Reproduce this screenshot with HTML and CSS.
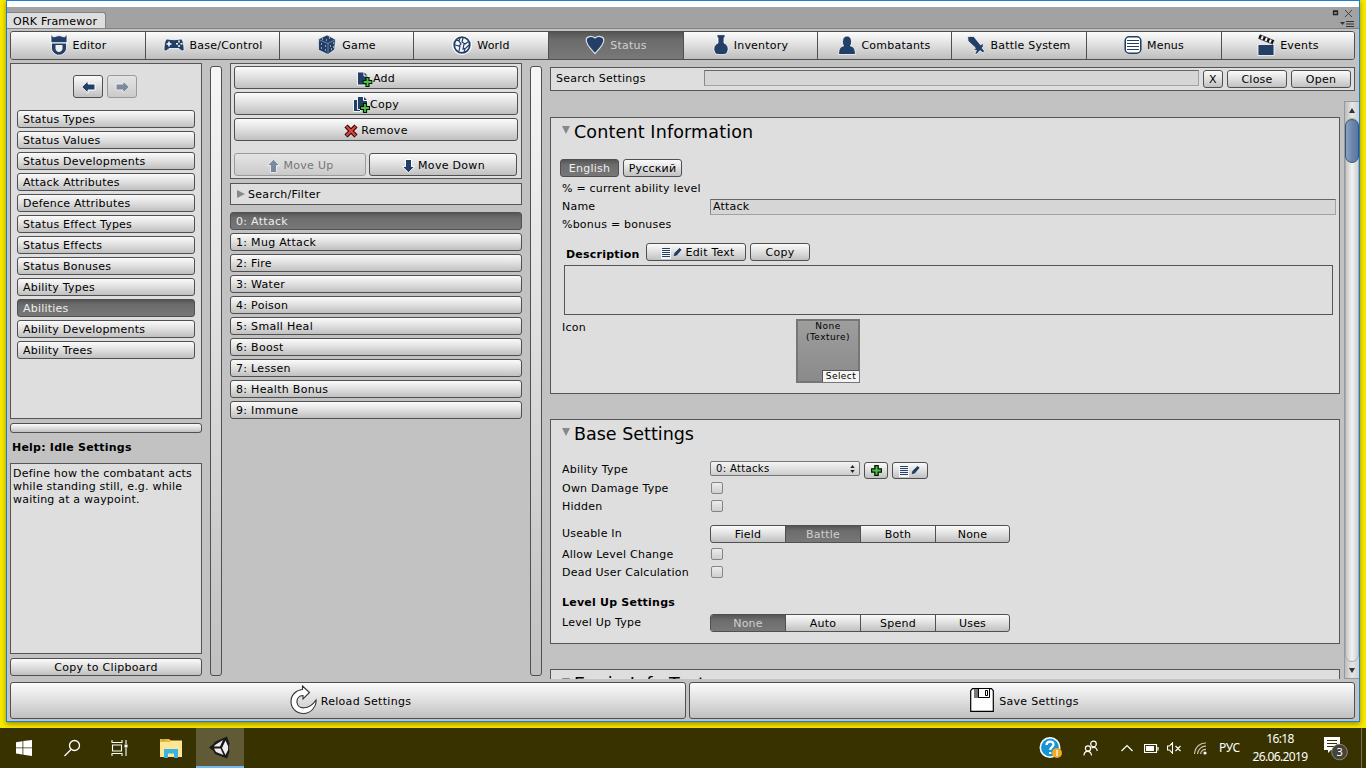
FILE: index.html
```html
<!DOCTYPE html>
<html lang="en">
<head>
<meta charset="utf-8">
<title>ORK Framework</title>
<link rel="stylesheet" href="styles.css">
</head>
<body>
<svg class="defs" width="0" height="0">
  <symbol id="plus" viewBox="0 0 10 10"><path d="M3.5 .5h3v3h3v3h-3v3h-3v-3h-3v-3h3z" fill="#4fc04a" stroke="#001a00" stroke-width="1.2"/></symbol>
  <symbol id="arrow" viewBox="0 0 15 14"><path d="M.7 7L7 .8V4H14v6H7v3.2z" fill="#233f66" stroke="#fff" stroke-width="1"/></symbol>
  <symbol id="edit" viewBox="0 0 22 12"><path d="M0 0h10v12H0z" fill="#f4f6fa"/><path d="M1 1.500h8M1 3.500h8M1 5.500h8M1 7.500h8M1 9.500h8" stroke="#233f66"/><path d="M12 10l1-4L18.500 .7l2.500 2-5 6z" fill="#233f66" stroke="#fff" stroke-width=".6"/></symbol>
</svg>
<div class="desktop">
  <div class="window">
    <div class="titlebar">
      <div class="tab">ORK Framewor</div>
      <svg class="winctl" width="24" height="22" viewBox="0 0 24 22"><path d="M1.500 5.500h4v3h-4zM1 5h5" fill="none" stroke="#222" stroke-width="1.300"/><path d="M13 4l7 7M20 4l-7 7" stroke="#444"/><path d="M8 16h5l-2.500 3z" fill="#333"/><path d="M14 15.500h8M14 18h8M14 20.500h8" stroke="#333"/></svg>
    </div>
    <div class="toolbar">
      <div class="tool w1"><svg width="18" height="22" viewBox="0 0 18 22"><path d="M1 .5l2.500 2.500Q9 0 14.500 3L17 .5V9h-.5v5c0 4-4 7.200-7.500 7.200S1.500 18 1.500 14V9H1z" fill="#233f66" stroke="#fff" stroke-width=".8"/><path d="M1 8.800h16" stroke="#fff" stroke-width="1.200"/><path d="M5.500 11h7v3.500c0 2-2 3.500-3.500 3.500s-3.500-1.500-3.500-3.500z" fill="#f2f2f2"/></svg>Editor</div>
      <div class="tool w2"><svg width="22" height="16" viewBox="0 0 22 16"><path d="M4 2Q11 3.500 18 2c2 0 3 6 3 10.500 0 2-3 2-5-1H6c-2 3-5 3-5 1C1 8 2 2 4 2z" fill="#233f66" stroke="#fff" stroke-width=".8"/><path d="M3.500 7h5M6 4.500v5" stroke="#fff" stroke-width="1.500"/><path d="M16 3.500v2M16 8v2M13 6.700h2M17.500 6.700h2" fill="none" stroke="#fff" stroke-width="1.500"/></svg>Base/Control</div>
      <div class="tool w3"><svg width="20" height="22" viewBox="0 0 20 22"><path d="M10 1l8.500 4.500-1 10L11 20.500 1.500 16v-11z" fill="#233f66" stroke="#fff" stroke-width=".6"/><path d="M1.500 5.500l9.500 4 7-4M11 9.500V20" stroke="#93a4bc" fill="none" stroke-width=".7"/><path d="M5 5h1M9 6h1M12 4h1M4 10h1M8 12h1M4 14h1M8 16h1M13 12h1M16 9h1M14 15h1M16 13h1" stroke="#fff" stroke-width="1.200"/></svg>Game</div>
      <div class="tool w4"><svg width="20" height="20" viewBox="0 0 20 20"><circle cx="10" cy="10" r="8.500" fill="#f4f6fa" stroke="#fff" stroke-width="3"/><circle cx="10" cy="10" r="7.800" fill="none" stroke="#233f66" stroke-width="1.800"/><path d="M4 5l3 1 2 3-2 2-4-1M7 6l1-3M8 11l-1 5M11 3l-1 4 3 2 3-2M12 9l-1 5 3-1 3-3M13 14l-1 3" fill="none" stroke="#233f66" stroke-width="1.200"/></svg>World</div>
      <div class="tool w5 on"><svg width="20" height="20" viewBox="0 0 20 20"><path d="M10 18.500C6 14 1.200 10 1.200 5 1.200 1 7 .5 10 3 13 .5 18.800 1 18.800 5c0 5-4.800 9-8.800 13.500z" fill="#233f66" stroke="#d8dde4" stroke-width="1.200"/></svg>Status</div>
      <div class="tool w6"><svg width="16" height="22" viewBox="0 0 16 22"><path d="M4 .7h8v3h-1V9c5 2.500 5 7 2.500 10.500-1 1.500-10 1.500-11 0C0 16 0 11.500 5 9V3.700H4z" fill="#233f66" stroke="#fff" stroke-width=".8"/></svg>Inventory</div>
      <div class="tool w7"><svg width="18" height="20" viewBox="0 0 18 20"><path d="M.6 19.500c0-6 2-8 5-8.500-2-3-1.500-10 3.400-10s5.400 7 3.400 10c3 .5 5 2.500 5 8.500z" fill="#233f66" stroke="#fff" stroke-width=".8"/></svg>Combatants</div>
      <div class="tool w8"><svg width="18" height="20" viewBox="0 0 18 20"><path d="M.7 1.500h6l7 8.500 2.500-2v3.500L15 13l2.500 3-1.500 2-3-2.500L10 19H7.500l2-3.500-3-.500 2-2L1 6z" fill="#233f66" stroke="#fff" stroke-width=".7"/></svg>Battle System</div>
      <div class="tool w9"><svg width="18" height="20" viewBox="0 0 18 20"><rect x=".4" y="1" width="17.200" height="18" rx="4.500" fill="#fff"/><rect x="1.200" y="1.800" width="15.600" height="16.400" rx="4" fill="#fff" stroke="#233f66" stroke-width="1.600"/><path d="M3 5.500h12M3 8.500h12M3 11.500h12M3 14.500h12" stroke="#233f66"/></svg>Menus</div>
      <div class="tool w10"><svg width="18" height="22" viewBox="0 0 18 22"><path d="M1 10.500h16v11H1z" fill="#233f66" stroke="#fff" stroke-width=".8"/><path d="M2 2.500L17 8.500" stroke="#fff" stroke-width="4.500"/><path d="M2 2.500L17 8.500" stroke="#111" stroke-width="3.600" stroke-dasharray="2.400 2"/><path d="M3 .7L17.500 6.800M1.500 4.500L16 10.300" stroke="#111" stroke-width=".7"/></svg>Events</div>
    </div>
    <div class="main">
      <div class="left">
        <div class="box sections">
          <div class="nav">
            <div class="btn"><svg width="15" height="14"><use href="#arrow"/></svg></div>
            <div class="btn off"><svg class="flip" width="15" height="14"><use href="#arrow"/></svg></div>
          </div>
          <div class="list">
            <div class="btn">Status Types</div><div class="btn">Status Values</div><div class="btn">Status Developments</div><div class="btn">Attack Attributes</div><div class="btn">Defence Attributes</div><div class="btn">Status Effect Types</div><div class="btn">Status Effects</div><div class="btn">Status Bonuses</div><div class="btn">Ability Types</div><div class="btn on">Abilities</div><div class="btn">Ability Developments</div><div class="btn">Ability Trees</div>
          </div>
        </div>
        <div class="btn hsplit"></div>
        <div class="helptitle">Help: Idle Settings</div>
        <div class="box help">Define how the combatant acts<br>while standing still, e.g. while<br>waiting at a waypoint.</div>
        <div class="btn clip">Copy to Clipboard</div>
      </div>
      <div class="vsplit"></div>
      <div class="middle">
        <div class="box actions">
          <div class="btn"><svg width="16" height="16" viewBox="0 0 16 16"><path d="M.5 1h7l3.500 3.500V14H.5z" fill="#233f66" stroke="#fff" stroke-width=".9"/><path d="M7 1v4h4" fill="none" stroke="#fff"/><use href="#plus" x="5.500" y="6" width="10" height="10"/></svg>Add</div>
          <div class="btn"><svg width="17" height="17" viewBox="0 0 17 17"><path d="M.5 3.500h7v12h-7z" fill="#233f66" stroke="#fff" stroke-width=".9"/><path d="M4.500 .5h6.500l3.500 3.500v9.500h-10z" fill="#233f66" stroke="#fff" stroke-width=".9"/><path d="M10.500 .5v4h4" fill="none" stroke="#fff"/><use href="#plus" x="7" y="7" width="10" height="10"/></svg>Copy</div>
          <div class="btn rm"><svg width="14" height="14" viewBox="0 0 14 14"><path d="M2 2l10 10M12 2L2 12" stroke="#260000" stroke-width="4.400"/><path d="M2.500 2.500l9 9M11.500 2.500l-9 9" stroke="#e04440" stroke-width="2.400"/></svg>Remove</div>
          <div class="moves">
            <div class="btn off"><svg class="up" width="15" height="14"><use href="#arrow"/></svg>Move Up</div>
            <div class="btn dn"><svg class="down" width="15" height="14"><use href="#arrow"/></svg>Move Down</div>
          </div>
        </div>
        <div class="box filter"><i class="tri-r"></i>Search/Filter</div>
        <div class="list entries">
          <div class="btn on">0: Attack</div><div class="btn">1: Mug Attack</div><div class="btn">2: Fire</div><div class="btn">3: Water</div><div class="btn">4: Poison</div><div class="btn">5: Small Heal</div><div class="btn">6: Boost</div><div class="btn">7: Lessen</div><div class="btn">8: Health Bonus</div><div class="btn">9: Immune</div>
        </div>
      </div>
      <div class="vsplit"></div>
      <div class="right">
        <div class="box search"><span>Search Settings</span><div class="field"></div><div class="btn x">X</div><div class="btn">Close</div><div class="btn">Open</div></div>
        <div class="scroller">
          <div class="panels">
            <div class="box content">
              <div class="head"><i class="tri-d"></i>Content Information</div>
              <div class="langs"><div class="btn on">English</div><div class="btn">Русский</div></div>
              <div class="row up0">% = current ability level</div>
              <div class="row up0"><span class="lab">Name</span><div class="field name">Attack</div></div>
              <div class="row up0">%bonus = bonuses</div>
              <div class="desc"><b>Description</b><div class="btn et"><svg width="22" height="12"><use href="#edit"/></svg>Edit Text</div><div class="btn cp">Copy</div></div>
              <div class="area"></div>
              <div class="iconrow"><span>Icon</span><div class="thumb"><div>None<br>(Texture)</div><em>Select</em></div></div>
            </div>
            <div class="box base">
              <div class="head"><i class="tri-d"></i>Base Settings</div>
              <div class="row type"><span class="lab">Ability Type</span><div class="drop">0: Attacks<svg width="5" height="8" viewBox="0 0 5 8"><path d="M.3 3l2.200-3 2.200 3zM.3 5l2.200 3 2.200-3z" fill="#222"/></svg></div><div class="btn pl"><svg width="11" height="11"><use href="#plus"/></svg></div><div class="btn ed"><svg width="22" height="12"><use href="#edit"/></svg></div></div>
              <div class="row"><span class="lab">Own Damage Type</span><i class="check"></i></div>
              <div class="row"><span class="lab">Hidden</span><i class="check"></i></div>
              <div class="row segrow"><span class="lab flat">Useable In</span><div class="seg"><b>Field</b><b class="on">Battle</b><b>Both</b><b>None</b></div></div>
              <div class="row"><span class="lab">Allow Level Change</span><i class="check"></i></div>
              <div class="row"><span class="lab">Dead User Calculation</span><i class="check"></i></div>
              <div class="row lvl"><strong>Level Up Settings</strong></div>
              <div class="row lvt"><span class="lab flat">Level Up Type</span><div class="seg"><b class="on">None</b><b>Auto</b><b>Spend</b><b>Uses</b></div></div>
            </div>
            <div class="box next"><div class="head"><i class="tri-d"></i>Equip Info Text</div></div>
          </div>
          <div class="sbar"><div class="sb"><i class="su"></i></div><div class="track"><div class="thumbbar"></div></div><div class="sb"><i class="sd"></i></div></div>
        </div>
      </div>
    </div>
    <div class="bottom">
      <div class="btn reload"><svg width="27" height="30" viewBox="0 0 27 30"><path d="M12.500 1l7 6.500-6.500 6.500V10.500c-4 0-6.500 3-6 7 1 7 12 8 19-2.500C27 21 21 28.500 13.500 28.500 6 28.500 1 23 1 16.500 1 10 6 5 12.500 4.500z" fill="#fff" stroke="#333" stroke-width="1.100"/></svg>Reload Settings</div>
      <div class="btn save"><svg width="24" height="24" viewBox="0 0 24 24"><path d="M2.500 .7h19l1.800 2v20.600H.7V2.700z" fill="#fff" stroke="#000" stroke-width="1.200"/><path d="M4 1h5v9H4z" fill="#777"/><path d="M8.500 1v8.500h11V1" fill="#fff" stroke="#000"/><path d="M15.500 2.500h2v5h-2z" fill="none" stroke="#000"/></svg>Save Settings</div>
    </div>
  </div>
</div>
<div class="taskbar">
  <div class="cell"><svg width="16" height="16" viewBox="0 0 16 16"><path d="M0 2.300l6.500-1v6.200H0zM7.300 1.100L16 0v7.500H7.300zM0 8.300h6.500v6.200l-6.500-1zM7.300 8.300H16V16l-8.700-1.200z" fill="#fff"/></svg></div>
  <div class="cell"><svg width="18" height="18" viewBox="0 0 18 18"><circle cx="11.500" cy="6.500" r="5" fill="none" stroke="#fff" stroke-width="1.300"/><path d="M8 10.500L1.500 17" stroke="#fff" stroke-width="1.300"/></svg></div>
  <div class="cell"><svg width="18" height="16" viewBox="0 0 18 16"><path d="M1 0v2.500h10V0M1 16v-2.500h10V16M1.500 5h9v6h-9zM15 0v4M15 8v8" fill="none" stroke="#fff" stroke-width="1.100"/><path d="M13.500 4.500h3v3h-3z" fill="#fff"/></svg></div>
  <div class="cell folder"><svg width="22" height="19" viewBox="0 0 22 19"><path d="M0 0h9l1.500 1.500H22V18H0z" fill="#ffe695"/><path d="M0 0h9l1 3H0z" fill="#f2b828"/><path d="M2 1h3" stroke="#36b7e8"/><path d="M4 10h14v9h-4v-4.500H8V19H4z" fill="#37b3e6"/></svg></div>
  <div class="cell active"><svg width="22" height="23" viewBox="0 0 22 23"><path d="M0 11.500L4.500 8l1-2L18 .5l2.500 7-1 4 1 4-2.500 7L6 18l-1.500-3z" fill="#191919"/><path d="M6 9l8-5-3 6.500H5zM5 12.500h6.500L14.500 19 7 16zM16.500 4.500L19 10v4l-2.500 5-3.500-7z" fill="#eee"/></svg></div>
  <div class="tray">
    <svg class="t-help" width="24" height="22" viewBox="0 0 24 22"><circle cx="11" cy="10.500" r="9.700" fill="#1695d3" stroke="#fff" stroke-width="1.600"/><path d="M7.500 8c.2-4.500 7-4.500 7-.5 0 2.500-3.300 2.700-3.300 5.500M11.200 15v2" fill="none" stroke="#fff" stroke-width="2.300"/><circle cx="18" cy="16" r="5" fill="#f6a821"/><path d="M18 13v6" stroke="#fff" stroke-width="1.400"/></svg>
    <svg class="t-people" width="15" height="17" viewBox="0 0 15 17"><g fill="none" stroke="#fff" stroke-width="1.200"><circle cx="10.500" cy="4" r="2.800"/><circle cx="5" cy="8.500" r="2.600"/><path d="M1 15.500c0-5.500 7-5.500 7.500 0M8.500 8c3-1.500 5.500 0 5.700 3"/></g></svg>
    <svg class="t-up" width="12" height="8" viewBox="0 0 12 8"><path d="M.5 7L6 1.500 11.500 7" fill="none" stroke="#fff" stroke-width="1.200"/></svg>
    <svg class="t-bat" width="15" height="9" viewBox="0 0 15 9"><path d="M.5 .5h12v8H.5zM14 3v3.500" fill="none" stroke="#fff" stroke-width="1.200"/><path d="M2 2h8v5H2z" fill="#fff"/></svg>
    <svg class="t-vol" width="15" height="12" viewBox="0 0 15 12"><path d="M.5 4h2l3-3.300v10.600l-3-3.300h-2zM8.500 4l5 5M13.500 4l-5 5" fill="none" stroke="#fff" stroke-width="1.100"/></svg>
    <svg class="t-wifi" width="13" height="13" viewBox="0 0 13 13"><path d="M.5 12C1 5 6 .7 12 1M3.500 12c.5-4.500 4-8 8.500-7.800M6.500 12c.5-2.500 2.500-4.700 5.500-4.700" fill="none" stroke="#c8c5b0" stroke-width="1.200"/><circle cx="11" cy="11" r="1.600" fill="#fff"/></svg>
    <span class="lang">РУС</span>
    <span class="clock">16:18<br>26.06.2019</span>
    <svg class="t-note" width="25" height="25" viewBox="0 0 25 25"><path d="M0 1h16v13H7l-3 3v-3H0z" fill="#fff"/><path d="M3 4.500h10M3 7.500h10M3 10.500h7" stroke="#383200"/><circle cx="15.500" cy="16" r="7.800" fill="#45433a" stroke="#8b8872"/><text x="15.500" y="20" text-anchor="middle" fill="#fff" class="cnt">3</text></svg>
  </div>
  <div class="peek"></div>
</div>
</body>
</html>
```
FILE: styles.css
```css
* { box-sizing: border-box; }
html, body { margin: 0; height: 768px; overflow: hidden; }
body { font: 11px/14px "DejaVu Sans", sans-serif; letter-spacing: .22px; color: #000; background: #f7e900; display: flex; flex-direction: column; }
.defs { position: absolute; }
svg { display: block; flex: none; }
.desktop { height: 728px; padding: 0 6px 6px; }
.window { width: 1354px; height: 722px; border: 1px solid #1a7fd0; background: #c2c2c2; display: flex; flex-direction: column; box-shadow: 0 2px 5px rgba(90,80,0,.6); }
.titlebar { height: 28px; border-top: 6px solid #fff; border-bottom: 1px solid #828282; background: #a2a2a2; display: flex; justify-content: space-between; align-items: flex-end; }
.tab { width: 99px; height: 16px; padding-left: 6px; line-height: 17px; background: #dedede; border: solid #828282; border-width: 1px 1px 0 0; border-radius: 0 3px 0 0; white-space: nowrap; }
.winctl { margin-right: 3px; }
.toolbar { display: flex; height: 29px; margin: 2px 4px 0 3px; border: 1px solid #4f4f4f; border-radius: 3px; overflow: hidden; flex: none; }
.tool { display: flex; align-items: center; justify-content: center; gap: 5px; padding-top: 1px; background: linear-gradient(#fcfcfc, #e4e4e4 40%, #bebebe); border-right: 1px solid #4f4f4f; flex: none; }
.tool svg { margin-top: -2px; }
.tool:last-child { border: 0; }
.w1 { width: 135px; } .w2, .w3, .w6, .w7 { width: 134px; } .w4, .w5, .w8, .w9 { width: 135px; } .w10 { flex: 1; }
.on { background: linear-gradient(#555, #6c6c6c 30%, #787878) !important; color: #eee; }
.tool.on, .seg .on { color: #d0d0d0; }
.box { background: #dedede; border: 1px solid #555; }
.btn { display: flex; align-items: center; justify-content: center; padding-top: 1px; border: 1px solid #505050; border-radius: 3px; background: linear-gradient(#fbfbfb, #e2e2e2 45%, #c0c0c0); height: 18px; line-height: 16px; white-space: nowrap; flex: none; }
.btn.off { border-color: #9a9a9a; background: linear-gradient(#e4e4e4, #d8d8d8 50%, #cacaca); color: #777; }
.off svg { opacity: .5; }
.main { display: flex; flex: none; height: 616px; margin: 3px 0 0 3px; }
.left { width: 192px; display: flex; flex-direction: column; }
.sections { height: 356px; padding: 11px 6px 0; }
.nav { display: flex; justify-content: center; gap: 4px; padding-right: 2px; }
.nav .btn { width: 30px; height: 23px; padding: 0; }
.flip { transform: scaleX(-1); }
.list { display: flex; flex-direction: column; gap: 3px; }
.sections .list { margin-top: 12px; }
.list .btn { justify-content: flex-start; padding-left: 5px; }
.entries .btn { letter-spacing: .3px; }
.hsplit { height: 10px; margin-top: 4px; }
.helptitle { font-weight: bold; margin: 8px 0 0 2px; }
.help { height: 191px; margin-top: 8px; padding: 3px 2px; line-height: 13px; white-space: nowrap; letter-spacing: .2px; }
.clip { margin-top: 4px; letter-spacing: .3px; }
.vsplit { width: 12px; height: 610px; margin: 3px 8px 0; border: 1px solid #505050; border-radius: 3px; background: linear-gradient(#f6f6f6, #c0c0c0); flex: none; }
.middle { width: 292px; flex: none; }
.actions { height: 116px; padding: 2px 3px; display: flex; flex-direction: column; gap: 3px; }
.actions .btn { height: 23px; padding-top: 2px; letter-spacing: .3px; }
.rm { gap: 3px; }
.moves { display: flex; gap: 3px; margin-top: 9px; }
.moves .off { width: 132px; gap: 2px; }
.moves .dn { width: 148px; gap: 2px; }
.up { transform: rotate(90deg); } .down { transform: rotate(-90deg); }
.filter { height: 22px; margin-top: 4px; line-height: 21px; display: flex; align-items: center; padding-left: 6px; gap: 3px; letter-spacing: .3px; }
.tri-r { border-left: 8px solid #888; border-top: 4.5px solid transparent; border-bottom: 4.5px solid transparent; }
.tri-d { width: 0; height: 0; border-top: 8px solid #888; border-left: 4.5px solid transparent; border-right: 4.5px solid transparent; }
.entries { margin-top: 7px; }
.right { width: 809px; flex: none; }
.search { width: 805px; height: 24px; margin-top: 4px; padding: 0 3px 0 5px; display: flex; align-items: flex-start; }
.search span { width: 148px; line-height: 21px; }
.search .field { width: 495px; height: 16px; margin-top: 2px; }
.search .btn { width: 60px; margin: 2px 0 0 4px; }
.search .x { width: 20px; }
.field { background: #d6d6d6; border: 1px solid #a2a2a2; border-top: 1px solid #666; border-left-color: #888; }
.scroller { margin-top: 10px; height: 578px; display: flex; justify-content: space-between; }
.panels { width: 790px; overflow: hidden; padding-top: 16px; }
.content { height: 277px; }
.head { display: flex; height: 28px; padding-left: 11px; font-size: 17.5px; line-height: 28px; gap: 4px; letter-spacing: .15px; }
.base .head { letter-spacing: 0; }
.head .tri-d { margin-top: 8px; }
.langs { display: flex; gap: 4px; padding: 13px 0 2px 9px; }
.langs .btn { width: 59px; }
.row { display: flex; height: 18px; align-items: center; padding-left: 11px; }
.lab { width: 148px; flex: none; padding-top: 1px; }
.lab.flat { padding: 0; }
.up0 { padding-top: 1px; }
.up0 .lab { padding-top: 0; }
.name { width: 626px; height: 16px; line-height: 14px; padding-left: 2px; }
.desc { display: flex; height: 32px; padding: 10px 0 0 15px; }
.desc b { width: 80px; line-height: 24px; }
.et { width: 100px; padding-left: 4px; gap: 2px; } .cp { width: 60px; margin-left: 4px; }
.area { height: 50px; width: 769px; margin-left: 13px; border: 1px solid #555; }
.iconrow { display: flex; padding: 4px 0 0 11px; }
.iconrow span { width: 234px; line-height: 17px; }
.thumb { position: relative; width: 64px; height: 64px; background: linear-gradient(#9e9e9e, #8a8a8a); border: 2px solid #767676; font-size: 9px; line-height: 11px; text-align: center; letter-spacing: .45px; }
.thumb em { position: absolute; right: -1px; bottom: -1px; width: 37px; height: 12px; background: #f4f4f4; border: solid #555; border-width: 1px 0 0 1px; font-style: normal; }
.base { height: 225px; margin-top: 25px; }
.type { height: 18px; margin-top: 13px; align-items: flex-start; }
.type .lab { line-height: 16px; }
.drop { width: 150px; height: 15px; border: 1px solid #777; border-radius: 2px; background: linear-gradient(#f4f4f4, #cdcdcd); font-size: 10px; line-height: 13px; padding: 0 4px 0 5px; display: flex; justify-content: space-between; align-items: center; letter-spacing: .35px; }
.type .btn { height: 17px; margin: 1px 0 0 4px; padding: 0; } .pl { width: 24px; } .ed { width: 36px; }
.check { width: 12px; height: 12px; margin-left: 1px; border: 1px solid #858585; border-radius: 2px; background: linear-gradient(#ececec, #cfcfcf); }
.segrow { height: 18px; margin: 10px 0 2px; }
.seg { display: flex; width: 300px; height: 18px; border: 1px solid #505050; border-radius: 3px; overflow: hidden; background: linear-gradient(#fbfbfb, #e2e2e2 45%, #c0c0c0); }
.seg b { width: 75px; flex: none; text-align: center; font-weight: normal; line-height: 17px; border-right: 1px solid #505050; }
.seg b:last-child { border: 0; width: 73px; }
.lvl { margin-top: 12px; padding-top: 1px; } .lvt { margin-top: 3px; }
.next { height: 40px; margin-top: 25px; }
.sbar { width: 15px; border: 1px solid #999; border-right: 0; background: linear-gradient(90deg, #bdbdbd, #e6e6e6 50%, #d0d0d0); display: flex; flex-direction: column; }
.sb { height: 16px; display: flex; align-items: center; justify-content: center; flex: none; }
.su { border: 3.5px solid transparent; border-top: 0; border-bottom: 5px solid #333; }
.sd { border: 3.5px solid transparent; border-bottom: 0; border-top: 5px solid #333; }
.track { flex: 1; border: 1px solid #aaa; border-radius: 7px; background: linear-gradient(90deg, #c8c8c8, #f2f2f2 50%, #d0d0d0); }
.thumbbar { height: 44px; border: 1px solid #3d5273; border-radius: 7px; background: linear-gradient(90deg, #8ba2c3, #6c87ae 50%, #5d7599); margin: 0 -1px; }
.bottom { display: flex; gap: 3px; padding: 3px 0 0 3px; }
.bottom .btn { height: 37px; gap: 4px; padding-top: 2px; letter-spacing: .3px; }
.bottom svg { margin-top: -4px; }
.bottom .reload { width: 676px; padding-left: 5px; } .bottom .save { width: 666px; padding-left: 5px; gap: 5px; }
.taskbar { height: 40px; background: #383200; color: #fff; display: flex; flex: none; position: relative; }
.cell { width: 48px; display: flex; align-items: center; justify-content: center; }
.cell:nth-child(4) { width: 52px; }
.folder { padding-left: 2px; }
.active { background: #605b36; border-bottom: 2px solid #76b9ed; }
.tray { display: flex; align-items: center; margin-left: 795px; font: 12px/18px "Noto Sans", sans-serif; letter-spacing: -.2px; }
.t-people { margin-left: 20px; } .t-up { margin-left: 23px; } .t-bat { margin-left: 11px; } .t-vol { margin-left: 8px; } .t-wifi { margin-left: 12px; }
.lang { margin-left: 12px; width: 22px; }
.clock { margin-left: 6px; width: 66px; text-align: center; letter-spacing: -.65px; }
.t-note { margin-left: 11px; }
.cnt { font: 11px "Noto Sans", sans-serif; }
.peek { margin-left: auto; width: 5px; border-left: 1px solid #777352; }
```
